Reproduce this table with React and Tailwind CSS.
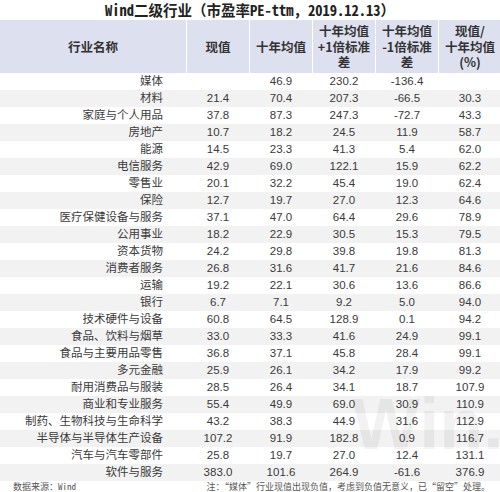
const rows = [
  ["媒体", "", "46.9", "230.2", "-136.4", ""],
  ["材料", "21.4", "70.4", "207.3", "-66.5", "30.3"],
  ["家庭与个人用品", "37.8", "87.3", "247.3", "-72.7", "43.3"],
  ["房地产", "10.7", "18.2", "24.5", "11.9", "58.7"],
  ["能源", "14.5", "23.3", "41.3", "5.4", "62.0"],
  ["电信服务", "42.9", "69.0", "122.1", "15.9", "62.2"],
  ["零售业", "20.1", "32.2", "45.4", "19.0", "62.4"],
  ["保险", "12.7", "19.7", "27.0", "12.3", "64.6"],
  ["医疗保健设备与服务", "37.1", "47.0", "64.4", "29.6", "78.9"],
  ["公用事业", "18.2", "22.9", "30.5", "15.3", "79.5"],
  ["资本货物", "24.2", "29.8", "39.8", "19.8", "81.3"],
  ["消费者服务", "26.8", "31.6", "41.7", "21.6", "84.6"],
  ["运输", "19.2", "22.1", "30.6", "13.6", "86.6"],
  ["银行", "6.7", "7.1", "9.2", "5.0", "94.0"],
  ["技术硬件与设备", "60.8", "64.5", "128.9", "0.1", "94.2"],
  ["食品、饮料与烟草", "33.0", "33.3", "41.6", "24.9", "99.1"],
  ["食品与主要用品零售", "36.8", "37.1", "45.8", "28.4", "99.1"],
  ["多元金融", "25.9", "26.1", "34.2", "17.9", "99.2"],
  ["耐用消费品与服装", "28.5", "26.4", "34.1", "18.7", "107.9"],
  ["商业和专业服务", "55.4", "49.9", "69.0", "30.9", "110.9"],
  ["制药、生物科技与生命科学", "43.2", "38.3", "44.9", "31.6", "112.9"],
  ["半导体与半导体生产设备", "107.2", "91.9", "182.8", "0.9", "116.7"],
  ["汽车与汽车零部件", "25.8", "19.7", "27.0", "12.4", "131.1"],
  ["软件与服务", "383.0", "101.6", "264.9", "-61.6", "376.9"],
];

const cols = "grid grid-cols-[186px_62px_62px_62px_62px_62px] gap-x-px";
const mono = "font-['Noto_Sans_Mono_CJK_SC','Liberation_Mono','Noto_Sans_CJK_SC',monospace]";

const HeadCell = ({ children }) => (
  <div className="bg-[#dde0ef] flex items-center justify-center text-center leading-[15.5px]">
    {children}
  </div>
);

export default function App() {
  return (
    <div className="relative w-[500px] h-[492px] bg-white overflow-hidden text-[#3a3a3a] font-['Liberation_Sans','Noto_Sans_CJK_SC',sans-serif]">
      <div className={`h-[20px] flex items-center justify-center text-[14.5px] font-bold text-[#222] ${mono}`}>
        Wind二级行业（市盈率PE-ttm，2019.12.13）
      </div>

      <div className={`${cols} h-[53px] bg-white text-[12.5px] font-bold text-[#333] font-['Noto_Sans_CJK_SC',sans-serif]`}>
        <HeadCell>行业名称</HeadCell>
        <HeadCell>现值</HeadCell>
        <HeadCell>十年均值</HeadCell>
        <HeadCell>
          十年均值
          <br />
          +1倍标准
          <br />
          差
        </HeadCell>
        <HeadCell>
          十年均值
          <br />
          -1倍标准
          <br />
          差
        </HeadCell>
        <HeadCell>
          现值/
          <br />
          十年均值
          <br />
          (%)
        </HeadCell>
      </div>

      <div className="text-[11.5px]">
        {rows.map((r, i) => (
          <div
            key={r[0]}
            className={`${cols} h-[17px] items-center ${i % 2 ? "bg-[#f2f2f2]" : "bg-white"}`}
          >
            <div className="text-right pr-[23px] whitespace-nowrap">{r[0]}</div>
            {r.slice(1).map((v, j) => (
              <div key={j} className="text-center">
                {v}
              </div>
            ))}
          </div>
        ))}
      </div>

      <div className="h-[11px] flex items-center justify-between pl-[13px] pr-[10px] text-[9px] text-[#555] font-['Noto_Sans_CJK_SC',sans-serif]">
        <span className={mono}>数据来源：Wind</span>
        <span>注：“媒体”行业现值出现负值，考虑到负值无意义，已“留空”处理。</span>
      </div>

      {/* faint watermark over the bottom-right corner */}
      <div className="pointer-events-none absolute left-[352px] top-[388px] text-[72px] font-bold leading-none text-black/[0.05] font-['Liberation_Sans',sans-serif]">
        Win.d
      </div>
    </div>
  );
}
